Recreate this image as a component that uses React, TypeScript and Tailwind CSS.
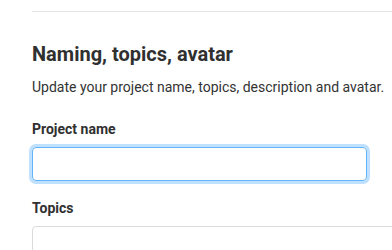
export default function App() {
  return (
    <main className="h-[250px] w-[392px] overflow-hidden bg-white font-['Roboto',sans-serif] text-[#303030]">
      <div className="ml-8 w-[420px]">
        <div className="mt-[11px] border-t border-[#e5e5e5]" />
        <section className="pt-[30px]">
          <h2 className="text-[20px] font-bold leading-6 text-[#303030]">Naming, topics, avatar</h2>
          <p className="mt-[11px] text-[14px] leading-5 text-[#333]">
            Update your project name, topics, description and avatar.
          </p>
          <label className="mt-[22px] block text-[14px] font-bold leading-5">Project name</label>
          <input
            className="mt-[8px] block h-[34px] w-[335px] rounded-[4px] border border-[#63b3f9] px-3 text-[14px] shadow-[0_0_0_3px_#bfe0ff] outline-none"
            type="text"
          />
          <label className="mt-[17px] block text-[14px] font-bold leading-5">Topics</label>
          <div className="mt-[8px] h-[34px] w-full rounded-[4px] border border-[#dbdbdb]" />
        </section>
      </div>
    </main>
  );
}
